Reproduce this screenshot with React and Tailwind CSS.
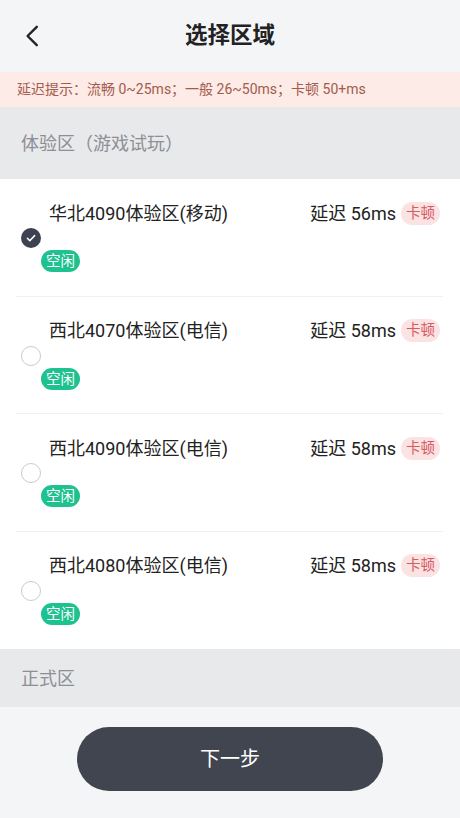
import React from "react";

const regions = [
  { name: "华北4090体验区(移动)", ping: 56, checked: true },
  { name: "西北4070体验区(电信)", ping: 58 },
  { name: "西北4090体验区(电信)", ping: 58 },
  { name: "西北4080体验区(电信)", ping: 58 },
];

const Radio = ({ checked }) =>
  checked ? (
    <span className="flex h-[20px] w-[20px] items-center justify-center rounded-full bg-[#3d4150]">
      <svg viewBox="0 0 20 20" className="h-[12px] w-[12px]" fill="none">
        <path d="M4 10.5l4 4 8-8.5" stroke="#fff" strokeWidth="2.6" strokeLinecap="round" strokeLinejoin="round" />
      </svg>
    </span>
  ) : (
    <span className="block h-[20px] w-[20px] rounded-full border border-[#c9cbcf] bg-white" />
  );

const RegionItem = ({ item, last }) => (
  <div className="relative pt-[22px] pb-[24.5px]">
    {/* name + latency */}
    <div className="flex h-[24px] items-center pr-[20px] pl-[49px]">
      <span className="flex-1 text-[18px] text-[#222]">{item.name}</span>
      <span className="text-[18px] text-[#222]">延迟 {item.ping}ms</span>
      <span className="ml-[5px] h-[23px] rounded-full bg-[#fbe3e3] px-[5px] pt-[2px] text-[14.5px] leading-[20px] text-[#d65a60]">
        卡顿
      </span>
    </div>
    {/* radio + status tag */}
    <div className="mt-[3px] flex items-start pl-[21px]">
      <Radio checked={item.checked} />
      <span className="mt-[22px] h-[22px] rounded-full bg-[#1ec28f] px-[5px] pt-[2px] text-[14.5px] leading-[19px] text-white">
        空闲
      </span>
    </div>
    {!last && <div className="absolute bottom-0 left-[16px] right-[17px] h-px bg-[#f0f0f2]" />}
  </div>
);

export default function App() {
  return (
    <div
      className="flex h-[818px] w-[460px] flex-col bg-[#f4f5f7]"
      style={{ fontFamily: 'Roboto, "Noto Sans CJK SC", "Noto Sans", sans-serif' }}
    >
      {/* top bar */}
      <header className="relative flex h-[72px] items-center justify-center">
        <svg viewBox="0 0 24 24" className="absolute left-[20px] top-[23px] h-[26px] w-[26px]" fill="none">
          <path d="M15.5 3.5L7 12l8.5 8.5" stroke="#222" strokeWidth="2.2" strokeLinecap="round" strokeLinejoin="round" />
        </svg>
        <h1 className="text-[22.5px] font-bold text-[#222]">选择区域</h1>
      </header>

      {/* latency legend */}
      <div className="flex h-[35px] items-center bg-[#fcebe6] pl-[17px] text-[14px] text-[#a45a4c]">
        延迟提示：流畅 0~25ms；一般 26~50ms；卡顿 50+ms
      </div>

      <div className="flex h-[72px] items-center bg-[#e8e9eb] pl-[21px] text-[18px] text-[#8d8f94]">
        体验区（游戏试玩）
      </div>

      <div className="bg-white">
        {regions.map((r, i) => (
          <RegionItem key={r.name} item={r} last={i === regions.length - 1} />
        ))}
      </div>

      <div className="flex h-[58px] items-center bg-[#e8e9eb] pl-[21px] text-[18px] text-[#8d8f94]">
        正式区
      </div>

      <div className="flex flex-1 justify-center pt-[20px]">
        <button
          type="button"
          className="h-[64px] w-[306px] rounded-full bg-[#41454f] text-[20px] text-white"
        >
          下一步
        </button>
      </div>
    </div>
  );
}
